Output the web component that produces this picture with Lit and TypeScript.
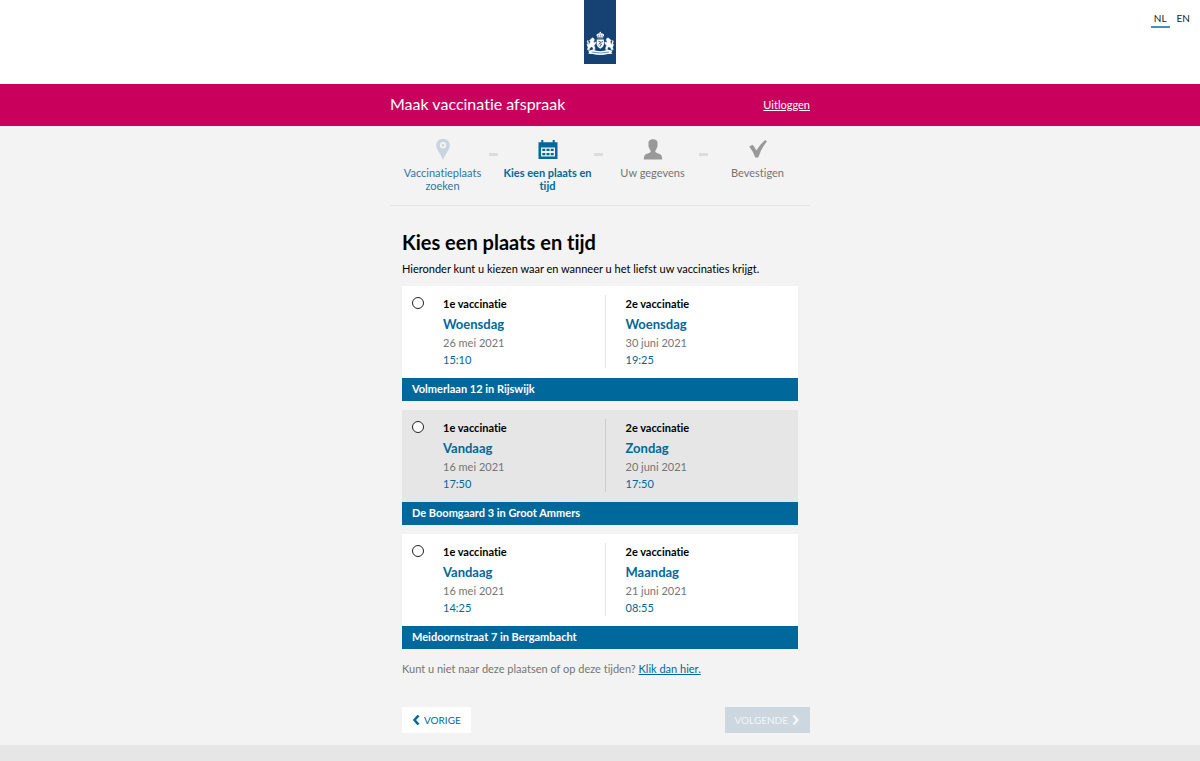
import { LitElement, html, svg, css } from "lit";
import { customElement, state } from "lit/decorators.js";
import { classMap } from "lit/directives/class-map.js";

interface Moment {
  day: string;
  date: string;
  time: string;
}

interface Slot {
  id: string;
  place: string;
  first: Moment;
  second: Moment;
}

const SLOTS: Slot[] = [
  {
    id: "rijswijk",
    place: "Volmerlaan 12 in Rijswijk",
    first: { day: "Woensdag", date: "26 mei 2021", time: "15:10" },
    second: { day: "Woensdag", date: "30 juni 2021", time: "19:25" },
  },
  {
    id: "groot-ammers",
    place: "De Boomgaard 3 in Groot Ammers",
    first: { day: "Vandaag", date: "16 mei 2021", time: "17:50" },
    second: { day: "Zondag", date: "20 juni 2021", time: "17:50" },
  },
  {
    id: "bergambacht",
    place: "Meidoornstraat 7 in Bergambacht",
    first: { day: "Vandaag", date: "16 mei 2021", time: "14:25" },
    second: { day: "Maandag", date: "21 juni 2021", time: "08:55" },
  },
];

const pin = svg`<path fill-rule="evenodd" d="M11 .8c-4 0-6.800 2.900-6.800 6.600 0 2 .9 3.700 2 5.600 1.800 3 3.400 5.200 4.800 9 1.400-3.800 3-6 4.800-9 1.100-1.900 2-3.600 2-5.600C17.800 3.700 15 .8 11 .8zm0 3.300a3.200 3.200 0 1 1 0 6.400 3.200 3.200 0 0 1 0-6.400z"/><circle cx="11" cy="7.300" r="1.200"/>`;
const calendar = svg`<path fill-rule="evenodd" d="M1.500 4.300h2.800V2h2v2.300h9.400V2h2v2.300h2.800v16.700h-19zM4 9.500v9h14v-9z"/><path d="M5.300 10.800h3v2.300h-3zM9.500 10.800h3v2.300h-3zM13.700 10.800h3v2.300h-3zM5.300 14.900h3v2.300h-3zM9.500 14.900h3v2.300h-3zM13.700 14.900h3v2.300h-3z"/>`;
const person = svg`<path d="M11 1.200c-3 0-4.600 1.500-4.600 4.100 0 .8.100 1.300.2 1.900-.4.300-.3 1.700.5 2.300.3 1.400.8 2.300 1.500 3v1.500c-.5 1-2.400 1.200-4.200 1.900C2.300 16.600 1.900 18.500 1.800 21.500h18.400c-.1-3-.5-4.900-2.600-5.600-1.800-.7-3.700-.9-4.200-1.900v-1.500c.7-.7 1.200-1.600 1.500-3 .8-.6.900-2 .5-2.300.1-.6.200-1.100.2-1.900C15.600 2.700 14 1.200 11 1.200z"/>`;
const check = svg`<path d="M2.200 8.400L5.500 6.700Q7.800 9 9.400 12.400Q12.800 6.500 18.200 2L19.900 3.400Q14.300 10 11.300 19.600H8.200Q6.200 13.200 2.200 8.400z"/>`;

const STEPS = [
  { label: "Vaccinatieplaats zoeken", icon: pin, kind: "done" },
  { label: "Kies een plaats en tijd", icon: calendar, kind: "current" },
  { label: "Uw gegevens", icon: person, kind: "todo" },
  { label: "Bevestigen", icon: check, kind: "todo" },
];

@customElement("rijks-emblem")
export class RijksEmblem extends LitElement {
  static styles = css`
    :host {
      display: block;
      width: 32px;
      height: 64px;
      background: #154273;
    }
    svg {
      display: block;
    }
  `;

  render() {
    const lion = svg`<path stroke="#fff" stroke-width="0.400" d="M7.200 38.700l1.400-.9 1.300.8.600 1.500-.9 1.200.7 1.700 1.200-1.200.6.900-1.200 1.900-.8 1.200.9 2-.2 1.900-1.900.1.300-1.800-1.500-1.300-1.900 1.300-.4 1.700H3.300l.7-2.500-1-2.300.9-1.700-.8-1.600.8-1.400.3 1.400.6 1.300-.5 1.800 1.300-.9.800-2.100-1-1.100z"/>`;
    return html`
      <svg width="32" height="64" viewBox="0 0 32 64" role="img" aria-label="Rijksoverheid">
        <g fill="#fff">
          <circle cx="16.300" cy="32.600" r="0.800" />
          <path d="M12.600 34.600q1.800-1.700 3.700-1.200 2-.5 3.700 1.200.5 1.200-.9 2.100v1.500h-5.600v-1.500q-1.400-.9-.9-2.100z" />
          <path d="M12.700 39.600h7.200v5.200q-.7 2.700-3.600 3.900-2.900-1.200-3.600-3.900z" />
          ${lion}
          <g transform="translate(32.600 0) scale(-1 1)">${lion}</g>
          <path d="M4 50.700l4.600-.9q7.700 2.800 15.400 0l4.600.9-1.200 1.500 1 1.500-4.500.3q-7.600 2-15.200 0l-4.500-.3 1-1.500z" />
        </g>
        <g fill="none" stroke="#154273" stroke-width="0.600">
          <path d="M14.600 36.500l-.4-1.700M16.300 36.500v-2M18 36.500l.4-1.700M13.700 37.400h5.200" />
          <path stroke-width="0.800" d="M14.400 41.200l2.400.8-1.500 1.700 2.300.4-1.800 2.700M18.500 41l-.8 1.700M14.200 44.500l.6 1" />
          <path d="M7.500 52q8.800 2.200 17.600 0" />
        </g>
      </svg>
    `;
  }
}

@customElement("step-list")
export class StepList extends LitElement {
  static styles = css`
    :host {
      display: block;
      border-bottom: 1px solid #e3e3e3;
    }
    .steps {
      display: flex;
      gap: 10px;
      list-style: none;
      margin: 0;
      padding: 12px 5px;
    }
    .step {
      flex: 1 1 0;
      display: flex;
      flex-direction: column;
      align-items: center;
      gap: 6px;
      position: relative;
      text-align: center;
      font-size: 11px;
      line-height: 13px;
      min-height: 55px;
      color: #757575;
    }
    .step:not(:last-child)::after {
      content: "";
      position: absolute;
      top: 15px;
      right: -8px;
      width: 9px;
      height: 3px;
      background: #dcdcdc;
    }
    .icon {
      display: block;
      fill: #999;
    }
    .done {
      color: #2f76a3;
    }
    .done .icon {
      fill: #c8d4de;
    }
    .current {
      color: #01689b;
      font-weight: 700;
    }
    .current .icon {
      fill: #01689b;
    }
  `;

  render() {
    return html`
      <ol class="steps">
        ${STEPS.map(
          (s) => html`
            <li
              class=${classMap({ step: true, [s.kind]: true })}
              aria-current=${s.kind === "current" ? "step" : "false"}
            >
              <svg class="icon" width="22" height="22" viewBox="0 0 22 22" aria-hidden="true">${s.icon}</svg>
              <span>${s.label}</span>
            </li>
          `
        )}
      </ol>
    `;
  }
}

@customElement("app-root")
export class AppRoot extends LitElement {
  @state() private chosen = "";

  static styles = css`
    :host {
      display: flex;
      flex-direction: column;
      min-height: 100vh;
      background: #f3f3f3;
      color: #000;
      font-family: Lato, "Noto Sans", sans-serif;
      font-size: 11px;
      line-height: 17px;
      font-variant-ligatures: none;
    }
    * {
      box-sizing: border-box;
    }
    .top {
      display: grid;
      grid-template-columns: 1fr auto 1fr;
      align-items: start;
      padding-bottom: 20px;
      background: #fff;
    }
    .languages {
      grid-column: 3;
      justify-self: end;
      display: flex;
      gap: 4px;
      padding: 11px 7px 0 0;
    }
    .emblem {
      grid-column: 2;
    }
    .language {
      padding: 0 3px;
      border-bottom: 2px solid transparent;
      color: #222;
      text-decoration: none;
      font-size: 10px;
      line-height: 15px;
    }
    .active {
      border-color: #4a8db5;
    }
    .banner {
      background: #ca005d;
      color: #fff;
    }
    .wrap {
      width: 100%;
      max-width: 420px;
      margin: 0 auto;
    }
    .bar {
      display: flex;
      align-items: center;
      justify-content: space-between;
      padding: 8px 0 10px;
    }
    .title {
      font-size: 16px;
      line-height: 24px;
    }
    .logout {
      color: inherit;
    }
    .content {
      padding: 24px 12px 0;
    }
    h1 {
      margin: 0;
      font-size: 20px;
      line-height: 24px;
      font-weight: 700;
    }
    p {
      margin: 0;
    }
    .intro {
      margin: 6px 0 9px;
    }
    .slots {
      display: grid;
      gap: 9px;
      border: 0;
      margin: 0;
      padding: 0;
    }
    .slot {
      display: block;
      background: #fff;
    }
    .shaded {
      background: #e6e6e6;
    }
    .body {
      display: grid;
      grid-template-columns: 31px 1fr;
      padding: 9px 10px 10px;
    }
    .moments {
      display: grid;
      grid-template-columns: 1fr 1fr;
      gap: 20px;
    }
    .moment {
      display: grid;
    }
    .moment:first-child {
      border-right: 1px solid #e6e6e6;
    }
    .shaded .moment:first-child {
      border-color: #ccc;
    }
    .radio {
      appearance: none;
      width: 12px;
      height: 12px;
      margin: 2px 0 0;
      border: 1px solid #222;
      border-radius: 50%;
      background: #fff;
    }
    .radio:checked {
      background: #01689b;
      box-shadow: inset 0 0 0 2px #fff;
    }
    .nth {
      font-weight: 700;
    }
    .day {
      margin: 3px 0 1px;
      color: #01689b;
      font-size: 13px;
      line-height: 18px;
      font-weight: 700;
    }
    .date,
    .other {
      color: #757575;
    }
    .time,
    .link {
      color: #01689b;
    }
    .place {
      display: block;
      padding: 2px 10px 4px;
      background: #01689b;
      color: #fff;
      font-weight: 700;
    }
    .other {
      margin: 11px 0 0;
    }
    .actions {
      display: flex;
      justify-content: space-between;
      padding: 30px 0 12px 12px;
    }
    .button {
      display: flex;
      align-items: center;
      gap: 4px;
      height: 26px;
      padding: 0 10px;
      border: 0;
      background: #fff;
      color: #01689b;
      font: inherit;
      font-size: 10px;
    }
    .button:disabled {
      background: #ccd7e0;
      color: #f3f6f8;
    }
    .chevron {
      fill: none;
      stroke: currentColor;
      stroke-width: 2.500;
    }
    .foot {
      flex: 1;
      min-height: 16px;
      background: #e6e6e6;
    }
  `;

  private moment(label: string, m: Moment) {
    return html`
      <span class="moment">
        <span class="nth">${label}</span>
        <span class="day">${m.day}</span>
        <span class="date">${m.date}</span>
        <span class="time">${m.time}</span>
      </span>
    `;
  }

  private slotCard(s: Slot, index: number) {
    return html`
      <label class=${classMap({ slot: true, shaded: index % 2 === 1 })} for=${s.id}>
        <span class="body">
          <input
            class="radio"
            type="radio"
            name="slot"
            id=${s.id}
            .checked=${this.chosen === s.id}
            @change=${() => (this.chosen = s.id)}
          />
          <span class="moments">
            ${this.moment("1e vaccinatie", s.first)} ${this.moment("2e vaccinatie", s.second)}
          </span>
        </span>
        <span class="place">${s.place}</span>
      </label>
    `;
  }

  render() {
    return html`
      <header>
        <div class="top">
          <rijks-emblem class="emblem"></rijks-emblem>
          <nav class="languages" aria-label="Taal">
            <a class="language active" href="#nl" aria-current="true">NL</a>
            <a class="language" href="#en">EN</a>
          </nav>
        </div>
        <div class="banner">
          <div class="wrap bar">
            <span class="title">Maak vaccinatie afspraak</span>
            <a class="logout" href="#uitloggen">Uitloggen</a>
          </div>
        </div>
      </header>
      <main class="wrap">
        <step-list></step-list>
        <div class="content">
          <h1>Kies een plaats en tijd</h1>
          <p class="intro">Hieronder kunt u kiezen waar en wanneer u het liefst uw vaccinaties krijgt.</p>
          <fieldset class="slots" aria-label="Kies een plaats en tijd">
            ${SLOTS.map((s, i) => this.slotCard(s, i))}
          </fieldset>
          <p class="other">
            Kunt u niet naar deze plaatsen of op deze tijden?
            <a class="link" href="#andere">Klik dan hier.</a>
          </p>
        </div>
        <div class="actions">
          <button class="button" type="button">
            <svg class="chevron" width="8" height="10" viewBox="0 0 8 10" aria-hidden="true"><path d="M6.500 .5L2.500 5l4 4.500" /></svg>
            VORIGE
          </button>
          <button class="button" type="button" ?disabled=${!this.chosen}>
            VOLGENDE
            <svg class="chevron" width="8" height="10" viewBox="0 0 8 10" aria-hidden="true"><path d="M1.500 .5l4 4.500-4 4.500" /></svg>
          </button>
        </div>
      </main>
      <footer class="foot"></footer>
    `;
  }
}
